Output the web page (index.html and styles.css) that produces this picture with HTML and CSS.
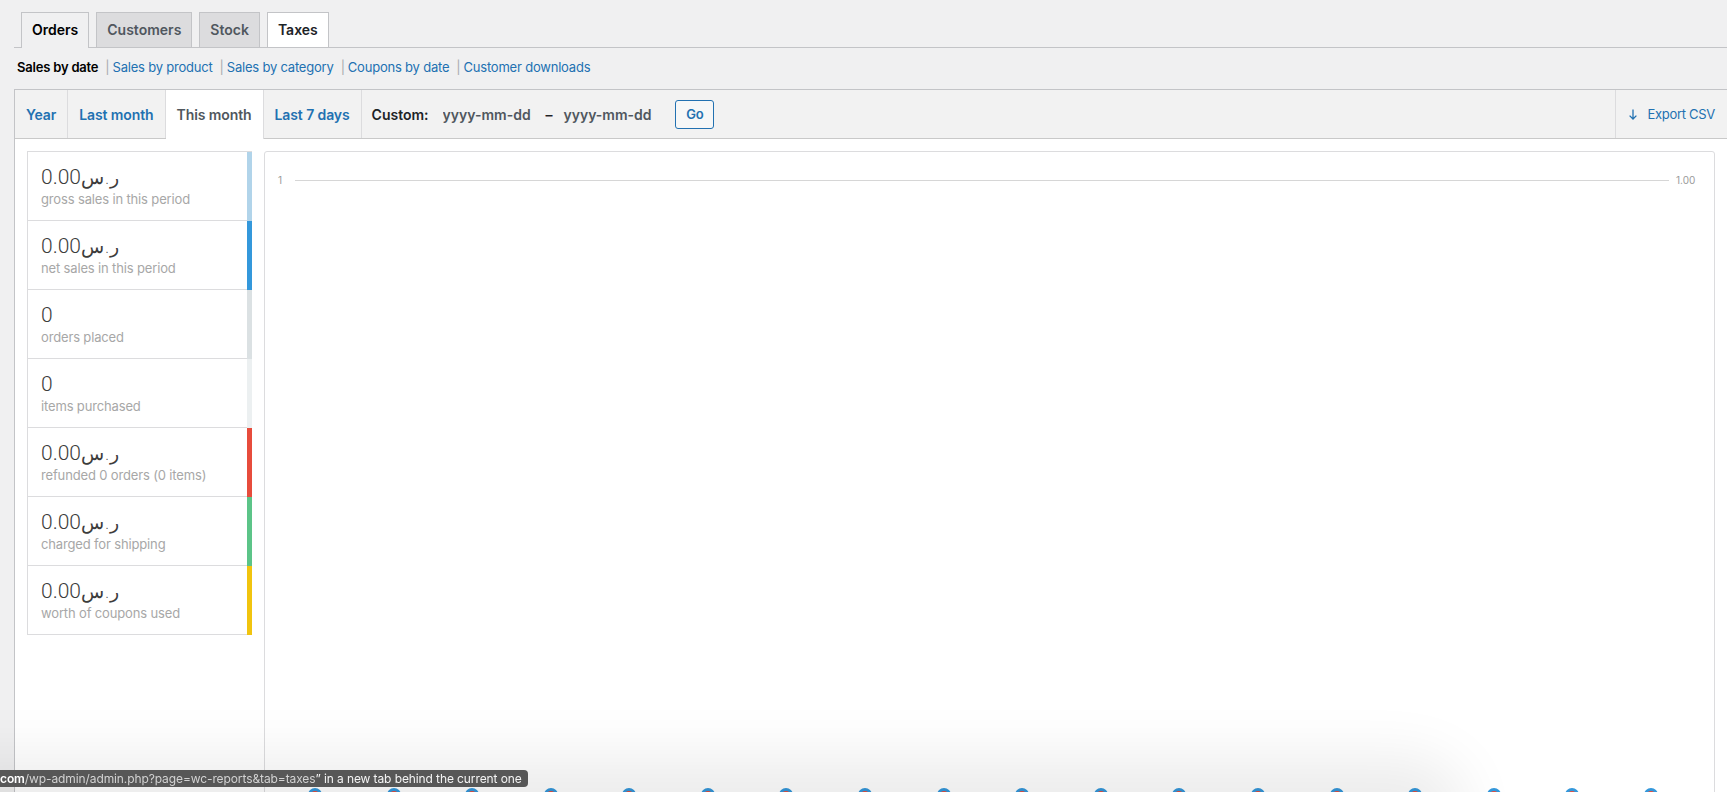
FILE: index.html
```html
<!DOCTYPE html>
<html lang="en">

<head>
    <meta charset="UTF-8">
    <meta name="viewport" content="width=device-width, initial-scale=1.0">
    <title>Reports ‹ WooCommerce</title>
    <link rel="stylesheet" href="styles.css">
</head>

<body>

    <div class="wrap">
        <nav class="nav-tab-wrapper">
            <a class="nav-tab nav-tab-active" href="#">Orders</a>
            <a class="nav-tab" href="#">Customers</a>
            <a class="nav-tab" href="#">Stock</a>
            <a class="nav-tab nav-tab-hover" href="#">Taxes</a>
        </nav>

        <ul class="subsubsub">
            <li><a class="current" href="#">Sales by date</a><span class="sep">|</span></li>
            <li><a href="#">Sales by product</a><span class="sep">|</span></li>
            <li><a href="#">Sales by category</a><span class="sep">|</span></li>
            <li><a href="#">Coupons by date</a><span class="sep">|</span></li>
            <li><a href="#">Customer downloads</a></li>
        </ul>

        <div class="postbox">
            <div class="stats-range">
                <ul class="ranges">
                    <li><a href="#">Year</a></li>
                    <li><a href="#">Last month</a></li>
                    <li class="active"><a href="#">This month</a></li>
                    <li><a href="#">Last 7 days</a></li>
                </ul>
                <form class="custom">
                    <span class="custom-label">Custom:</span>
                    <input class="date-from" type="text" placeholder="yyyy-mm-dd">
                    <span class="dash">–</span>
                    <input class="date-to" type="text" placeholder="yyyy-mm-dd">
                    <button class="button" type="button">Go</button>
                </form>
                <a class="export" href="#">
                    <svg width="10" height="11" viewBox="0 0 10 11">
                        <path d="M5 0.5V10M1.6 6.6L5 10L8.4 6.6" fill="none" stroke="#2271b1" stroke-width="1.3" />
                    </svg>
                    Export CSV
                </a>
            </div>

            <div class="inside">
                <ul class="chart-legend">
                    <li class="legend-gross"><strong>0.00<span class="currency">ر.س</span></strong>gross sales in this period</li>
                    <li class="legend-net"><strong>0.00<span class="currency">ر.س</span></strong>net sales in this period</li>
                    <li class="legend-orders"><strong>0</strong>orders placed</li>
                    <li class="legend-items"><strong>0</strong>items purchased</li>
                    <li class="legend-refunds"><strong>0.00<span class="currency">ر.س</span></strong>refunded 0 orders (0 items)</li>
                    <li class="legend-shipping"><strong>0.00<span class="currency">ر.س</span></strong>charged for shipping</li>
                    <li class="legend-coupons"><strong>0.00<span class="currency">ر.س</span></strong>worth of coupons used</li>
                </ul>

                <div class="chart-container">
                    <div class="plot">
                        <div class="axis-row">
                            <span class="tick-left">1</span>
                            <i class="grid-line"></i>
                            <span class="tick-right">1.00</span>
                        </div>
                        <div class="points">
                            <i class="point"></i><i class="point"></i><i class="point"></i>
                            <i class="point"></i><i class="point"></i><i class="point"></i>
                            <i class="point"></i><i class="point"></i><i class="point"></i>
                            <i class="point"></i><i class="point"></i><i class="point"></i>
                            <i class="point"></i><i class="point"></i><i class="point"></i>
                            <i class="point"></i><i class="point"></i><i class="point"></i>
                        </div>
                    </div>
                </div>
            </div>
        </div>
    </div>

    <div class="status-fade"></div>
    <div class="status-bubble"><span class="url"><b>com</b>/wp-admin/admin.php?page=wc-reports&amp;tab=taxes</span>” in a new tab behind the current one</div>

</body>

</html>
```

FILE: styles.css
```css
body {
    margin: 0;
    height: 100vh;
    overflow: hidden;
    background-color: #f0f0f1;
    font-family: Inter, "DejaVu Sans", sans-serif;
    font-size: 13px;
    letter-spacing: -0.15px;
    color: #3c434a;
}

a {
    color: #2271b1;
    text-decoration: none;
}

.wrap {
    padding: 12px 0 0 14px;
}

/* top tabs */
.nav-tab-wrapper {
    display: flex;
    border-bottom: 1px solid #c3c4c7;
}

.nav-tab {
    margin-left: 7px;
    padding: 5px 10px;
    font-size: 14px;
    line-height: 24px;
    font-weight: 600;
    letter-spacing: 0;
    border: 1px solid #c3c4c7;
    border-bottom: none;
    background-color: #dcdcde;
    color: #50575e;
}

.nav-tab-active {
    background-color: #f0f0f1;
    color: #000;
    margin-bottom: -1px;
    padding-bottom: 6px;
}

.nav-tab-hover {
    background-color: #fff;
    color: #1d2327;
}

/* report links */
.subsubsub {
    display: flex;
    list-style: none;
    margin: 10px 0 0 3px;
    padding: 0;
    font-size: 13px;
    line-height: 18px;
    letter-spacing: -0.2px;
}

.subsubsub .current {
    color: #000;
    font-weight: 600;
}

.subsubsub .sep {
    margin: 0 3px 0 7px;
    color: #a7aaad;
}

/* report box */
.postbox {
    margin-top: 13px;
    margin-right: -1px;
    height: 720px;
    border: 1px solid #c3c4c7;
    background-color: #fff;
}

.stats-range {
    display: flex;
    height: 48px;
    background-color: #f2f2f2;
    border-bottom: 1px solid #c9c9c9;
}

.ranges {
    display: flex;
    list-style: none;
    margin: 0;
    padding: 0;
}

.ranges a {
    display: flex;
    align-items: center;
    height: 100%;
    padding: 0 11px;
    border-right: 1px solid #dcdcde;
    font-size: 14px;
    font-weight: 600;
    letter-spacing: -0.1px;
    box-sizing: border-box;
}

.ranges .active a {
    height: 49px;
    background-color: #fff;
    color: #50575e;
}

.custom {
    display: flex;
    align-items: center;
    margin: 0 0 0 10px;
}

.custom-label {
    font-size: 14px;
    font-weight: 600;
    letter-spacing: 0;
    color: #1d2327;
}

.custom input {
    width: 100px;
    padding: 0 2px;
    border: 0;
    background: transparent;
    font-family: Inter, sans-serif;
    font-size: 14px;
    font-weight: 600;
    letter-spacing: 0;
    color: #50575e;
    outline: none;
}

.custom input::placeholder {
    color: #50575e;
    opacity: 1;
}

.custom .date-from {
    margin-left: 12px;
}

.custom .date-to {
    margin-left: 9px;
}

.dash {
    margin-left: 1px;
    font-size: 14px;
    font-weight: 600;
    color: #1d2327;
}

.button {
    margin-left: 10px;
    width: 39px;
    height: 29px;
    padding: 0;
    border: 1px solid #2271b1;
    border-radius: 3px;
    background-color: #f6f7f7;
    color: #2271b1;
    font-family: Inter, sans-serif;
    font-size: 13px;
    font-weight: 600;
}

.export {
    display: flex;
    align-items: center;
    gap: 10px;
    margin-left: auto;
    padding: 0 12px 0 12px;
    border-left: 1px solid #dcdcde;
    font-size: 13px;
    letter-spacing: -0.3px;
}

/* legend + chart */
.inside {
    display: flex;
    align-items: flex-start;
    gap: 12px;
    padding: 12px;
}

.chart-legend {
    flex: none;
    width: 225px;
    box-sizing: border-box;
    margin: 0;
    padding: 0;
    list-style: none;
    border: 1px solid #dcdcde;
    border-right: 0;
    border-bottom: 0;
}

.chart-legend li {
    padding: 13px;
    border-right: 5px solid #aaa;
    box-shadow: inset 0 -1px 0 0 #dcdcde;
    color: #a7a7a7;
    font-size: 13px;
    line-height: 18px;
}

.chart-legend strong {
    display: block;
    font-family: Roboto, "DejaVu Sans", sans-serif;
    font-size: 21px;
    line-height: 25px;
    font-weight: 300;
    letter-spacing: 0;
    color: #3c3c3c;
}

.currency {
    font-family: "DejaVu Sans", sans-serif;
    font-size: 19px;
    font-weight: 300;
}

.legend-gross { border-right-color: #b1d4ea !important; }
.legend-net { border-right-color: #3498db !important; }
.legend-orders { border-right-color: #dbe1e3 !important; }
.legend-items { border-right-color: #ecf0f1 !important; }
.legend-refunds { border-right-color: #e74c3c !important; }
.legend-shipping { border-right-color: #5cc488 !important; }
.legend-coupons { border-right-color: #f1c40f !important; }

.chart-container {
    flex: 1;
    padding: 12px;
    border: 1px solid #dcdcde;
    border-radius: 3px;
    background-color: #fff;
}

.plot {
    display: flex;
    flex-direction: column;
    justify-content: space-between;
    height: 638px;
}

.axis-row {
    display: flex;
    align-items: center;
    height: 14px;
    margin-top: 9px;
    font-size: 10px;
    letter-spacing: 0;
    color: #9a9a9a;
}

.tick-left {
    width: 17px;
    padding-left: 1px;
}

.grid-line {
    flex: 1;
    height: 1px;
    background-color: #d6d6d6;
}

.tick-right {
    width: 26px;
    padding-left: 7px;
}

.points {
    display: flex;
    justify-content: space-between;
    padding: 0 44px 0 31px;
}

.point {
    width: 14px;
    height: 14px;
    box-sizing: border-box;
    border: 3px solid #3498db;
    border-radius: 50%;
    background-color: #e74c3c;
}

/* browser status bubble */
.status-fade {
    position: fixed;
    left: -60px;
    bottom: -40px;
    width: 1490px;
    height: 40px;
    border-radius: 40px;
    box-shadow: 0 0 60px 34px rgba(0, 0, 0, 0.08);
}

.status-bubble {
    position: fixed;
    left: 0;
    top: 770px;
    height: 17px;
    padding-right: 6px;
    border-radius: 0 4px 4px 0;
    background-color: #575757;
    color: #f4f4f4;
    font-size: 12px;
    line-height: 17px;
    letter-spacing: -0.1px;
    white-space: nowrap;
}

.status-bubble .url {
    color: #d2d2d2;
}

.status-bubble b {
    color: #fff;
    font-weight: 600;
}
```
